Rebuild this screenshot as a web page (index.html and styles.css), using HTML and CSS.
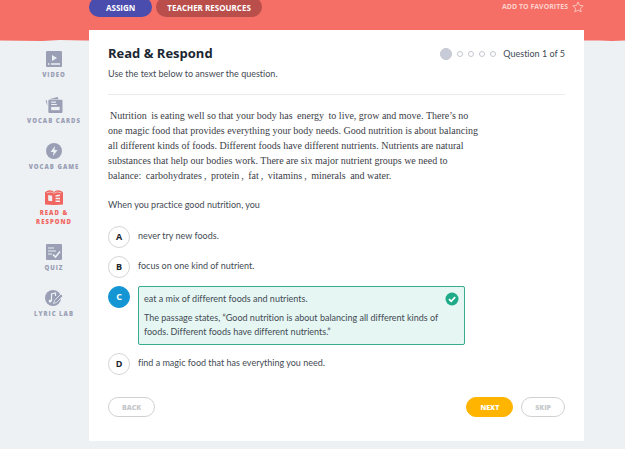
FILE: index.html
```html
<!DOCTYPE html>
<html lang="en">
<head>
    <meta charset="UTF-8">
    <meta name="viewport" content="width=device-width, initial-scale=1">
    <title>Read &amp; Respond</title>
    <link rel="stylesheet" href="styles.css">
</head>
<body>
    <header class="hero">
        <div class="hero-bar">
            <button type="button" class="pill pill-assign">ASSIGN</button>
            <button type="button" class="pill pill-resources">TEACHER RESOURCES</button>
            <a href="#" class="favorites">ADD TO FAVORITES
                <svg width="12" height="12" viewBox="0 0 12 12"><path d="M6 1l1.5 3.4 3.7.4-2.8 2.4.8 3.7L6 9.1l-3.2 1.8.8-3.7L.8 4.8l3.7-.4z" fill="none" stroke="#fbc0ba" stroke-linejoin="round"/></svg>
            </a>
        </div>
        <svg class="wave" viewBox="0 0 625 4" preserveAspectRatio="none"><path d="M0 0H625V2.500L612 3L600 2.500H85L60 2L42 3L0 2.500Z" fill="#f56f66"/></svg>
    </header>

    <div class="layout">
        <nav class="sidebar">
            <a href="#" class="side-link">
                <svg width="16" height="16" viewBox="0 0 16 16"><rect width="16" height="16" rx="1" fill="currentColor"/><path d="M6 4l5 3-5 3z" fill="#edf1f4"/><path d="M2 13h1.5M5 13h9" stroke="#edf1f4" stroke-width="1.3"/></svg>
                <span>VIDEO</span>
            </a>
            <a href="#" class="side-link">
                <svg width="18" height="16" viewBox="0 0 18 17"><path d="M0 4l1.500-.5L2 9zM3.500 2.300L13 0l.7 2.500H3.500z" fill="currentColor"/><rect x="3" y="3" width="15" height="14" rx="1" fill="currentColor"/><path d="M6 5.500h5M6 8h6" stroke="#edf1f4" stroke-width="1.200"/><path d="M6 10.500h9v3.500H6z" fill="#edf1f4"/></svg>
                <span>VOCAB CARDS</span>
            </a>
            <a href="#" class="side-link">
                <svg width="16" height="16" viewBox="0 0 16 16"><circle cx="8" cy="8" r="8" fill="currentColor"/><path d="M9 3L4.500 9H7.500L7 13l4.500-6H8.500z" fill="#edf1f4"/></svg>
                <span>VOCAB GAME</span>
            </a>
            <a href="#" class="side-link active">
                <svg width="18" height="16" viewBox="0 0 18 16"><path d="M0 3l2-.3V14l7 1 7-1V2.700l2 .3v12.500L9 16l-9-.5z" fill="currentColor"/><path d="M1 2.500Q6 0 9 3q3-3 8-.5V15l-8 .5-8-.5z" fill="currentColor"/><path d="M1.500 3.800Q6.500 2 9 4.200q2.500-2.200 7.500-.4" fill="none" stroke="#edf1f4" stroke-width=".6"/><path d="M3.200 6l4 .8v5.500l-4-.5z" fill="#edf1f4"/><path d="M10.500 7l4.500-.7M10.500 9.500h4.500M10.500 12.200h4.500" stroke="#edf1f4" stroke-width="1.400"/></svg>
                <span>READ &amp;<br>RESPOND</span>
            </a>
            <a href="#" class="side-link">
                <svg width="16" height="16" viewBox="0 0 16 16"><rect width="16" height="16" rx="1" fill="currentColor"/><path d="M2 4h6M2 7h8M2 10h4" stroke="#edf1f4" stroke-width="1.200"/><path d="M7 10.500l2.500 2.500L14 7.500" fill="none" stroke="#edf1f4" stroke-width="1.600"/></svg>
                <span>QUIZ</span>
            </a>
            <a href="#" class="side-link">
                <svg width="18" height="16" viewBox="0 0 18 16"><circle cx="8" cy="8" r="8" fill="currentColor"/><path d="M6.500 11V4l4-1v3" fill="none" stroke="#edf1f4" stroke-width="1.200"/><circle cx="5.200" cy="11" r="1.500" fill="#edf1f4"/><path d="M8.500 13.500l1-3L16 4l2 2-6.500 6.500z" fill="currentColor" stroke="#edf1f4" stroke-width=".8"/></svg>
                <span>LYRIC LAB</span>
            </a>
        </nav>

        <main class="card">
            <div class="card-header">
                <div>
                    <h1>Read &amp; Respond</h1>
                    <p>Use the text below to answer the question.</p>
                </div>
                <div class="progress">
                    <span class="dot current"></span>
                    <span class="dot"></span>
                    <span class="dot"></span>
                    <span class="dot"></span>
                    <span class="dot"></span>
                    <span class="progress-text">Question 1 of 5</span>
                </div>
            </div>

            <p class="passage">
                <span class="term">Nutrition</span> is eating well so that your body has <span class="term">energy</span> to live, grow and move. There’s no<br>
                one magic food that provides everything your body needs. Good nutrition is about balancing<br>
                all different kinds of foods. Different foods have different nutrients. Nutrients are natural<br>
                substances that help our bodies work. There are six major nutrient groups we need to<br>
                balance: <span class="term">carbohydrates</span>, <span class="term">protein</span>, <span class="term">fat</span>, <span class="term">vitamins</span>, <span class="term">minerals</span> and water.
            </p>

            <form>
                <fieldset class="choices">
                    <legend>When you practice good nutrition, you</legend>
                    <div class="choice">
                        <span class="letter"><input type="radio" name="answer" id="a"><b>A</b></span>
                        <label for="a">never try new foods.</label>
                    </div>
                    <div class="choice">
                        <span class="letter"><input type="radio" name="answer" id="b"><b>B</b></span>
                        <label for="b">focus on one kind of nutrient.</label>
                    </div>
                    <div class="choice">
                        <span class="letter"><input type="radio" name="answer" id="c" checked><b>C</b></span>
                        <div class="feedback">
                            <div class="feedback-top">
                                <label for="c">eat a mix of different foods and nutrients.</label>
                                <svg width="14" height="14" viewBox="0 0 14 14"><circle cx="7" cy="7" r="6.500" fill="#1fab89"/><path d="M4 7.200l2.200 2.100L10.200 5" fill="none" stroke="#fff" stroke-width="1.800"/></svg>
                            </div>
                            <p>The passage states, “Good nutrition is about balancing all different kinds of<br>foods. Different foods have different nutrients.”</p>
                        </div>
                    </div>
                    <div class="choice">
                        <span class="letter"><input type="radio" name="answer" id="d"><b>D</b></span>
                        <label for="d">find a magic food that has everything you need.</label>
                    </div>
                </fieldset>

                <div class="actions">
                    <button type="button" class="btn">BACK</button>
                    <button type="button" class="btn btn-next">NEXT</button>
                    <button type="button" class="btn">SKIP</button>
                </div>
            </form>
        </main>
    </div>
</body>
</html>
```

FILE: styles.css
```css
* {
    box-sizing: border-box;
}
body {
    margin: 0;
    background-color: #edf1f4;
    font-family: Lato, "Open Sans", sans-serif;
    font-size: 9px;
    font-variant-ligatures: none;
    line-height: 14px;
    color: #444b54;
}
h1, p {
    margin: 0;
}
svg {
    display: block;
    flex: none;
}
button {
    font-family: "Open Sans", sans-serif;
    font-weight: 800;
    cursor: pointer;
}

/* Top banner */
.hero-bar {
    display: flex;
    gap: 4px;
    height: 38px;
    padding: 0 41px 0 89px;
    align-items: flex-start;
    background-color: #f56f66;
}
.wave {
    width: 100%;
    height: 4px;
}
.pill {
    height: 20px;
    margin-top: -3px;
    padding: 0 17px;
    border: none;
    border-radius: 10px;
    color: white;
    font-size: 8px;
    font-weight: 700;
}
.pill-assign {
    background-color: #4a4cae;
}
.pill-resources {
    background-color: #b94e4b;
    padding: 0 11px;
}
.favorites {
    display: flex;
    align-items: center;
    gap: 4px;
    margin-left: auto;
    color: #fdd0cb;
    font-family: "Open Sans", sans-serif;
    font-size: 7px;
    font-weight: 700;
    text-decoration: none;
}

/* Page columns */
.layout {
    display: grid;
    grid-template-columns: 89px 1fr 41px;
    margin-top: -12px;
    position: relative;
}
.sidebar {
    display: flex;
    flex-direction: column;
    gap: 17px;
    padding: 21px 0 0 19px;
}
.side-link {
    display: flex;
    flex-direction: column;
    align-items: center;
    gap: 4px;
    color: #9a9fb5;
    font-family: "Open Sans", sans-serif;
    font-size: 6px;
    font-weight: 800;
    line-height: 9px;
    letter-spacing: 1px;
    text-align: center;
    text-decoration: none;
    white-space: nowrap;
}
.side-link.active {
    color: #f0655f;
}
.card {
    padding: 14px 19px 24px;
    margin-bottom: 8px;
    background-color: white;
}

/* Card header */
.card-header {
    display: flex;
    justify-content: space-between;
    padding-bottom: 13px;
    margin-bottom: 13px;
    border-bottom: 1px solid #e9ebed;
}
h1 {
    margin-bottom: 5px;
    color: #1c2733;
    font-family: "Open Sans", sans-serif;
    font-size: 13px;
    line-height: 18px;
}
.progress {
    display: flex;
    align-items: center;
    gap: 5px;
    height: 20px;
}
.dot {
    width: 6px;
    height: 6px;
    border: 1px solid #c4c7cf;
    border-radius: 50%;
}
.dot.current {
    width: 12px;
    height: 12px;
    background-color: #c8cbd8;
}
.progress-text {
    margin-left: 2px;
}

/* Reading passage */
.passage {
    margin-bottom: 15px;
    font-family: "Liberation Serif", serif;
    font-size: 10px;
    line-height: 15px;
    color: #3c4048;
}
.term {
    padding: 0 2px;
}

/* Answers */
.choices {
    display: flex;
    flex-direction: column;
    gap: 8px;
    margin: 0;
    padding: 0;
    border: none;
}
legend {
    padding: 0;
    margin-bottom: 14px;
}
.choice {
    display: flex;
    gap: 8px;
}
.choice > label {
    line-height: 20px;
}
.letter {
    display: grid;
    flex: none;
    width: 22px;
    height: 22px;
    place-items: center;
}
.letter input,
.letter b {
    grid-area: 1 / 1;
}
.letter input {
    appearance: none;
    width: 22px;
    height: 22px;
    margin: 0;
    border: 1px solid #d3d6d8;
    border-radius: 50%;
}
.letter b {
    color: #20252c;
    font-family: "Open Sans", sans-serif;
    pointer-events: none;
}
.letter input:checked {
    border-color: #1496d4;
    background-color: #1496d4;
}
.letter input:checked + b {
    color: white;
}
.feedback {
    flex: 0 1 327px;
    padding: 5px;
    border: 1px solid #35ab90;
    border-radius: 2px;
    background-color: #e5f6f3;
}
.feedback-top {
    display: flex;
    justify-content: space-between;
    margin-bottom: 5px;
}

/* Buttons */
.actions {
    display: flex;
    gap: 8px;
    margin-top: 22px;
}
.btn {
    height: 20px;
    padding: 0 13px;
    border: 1px solid #cfd1d3;
    border-radius: 10px;
    background-color: white;
    color: #c6c8cb;
    font-size: 7px;
}
.btn-next {
    margin-left: auto;
    border-color: #ffb400;
    background-color: #ffb400;
    color: white;
}

@media (max-width: 500px) {
    .layout {
        grid-template-columns: 89px 1fr;
    }
}
```
